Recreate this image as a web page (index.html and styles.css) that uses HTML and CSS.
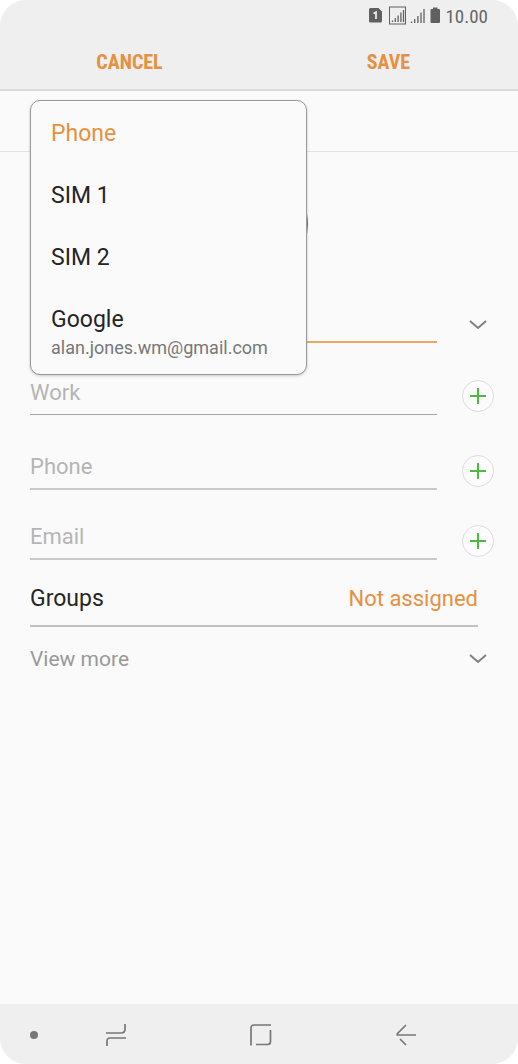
FILE: index.html
```html
<!DOCTYPE html>
<html lang="en">
<head>
<meta charset="utf-8">
<meta name="viewport" content="width=device-width, initial-scale=1">
<title>Create contact</title>
<link rel="stylesheet" href="styles.css">
</head>
<body>
<div class="screen">
  <header class="top">
    <div class="status">
      <svg class="status-icons" width="74" height="20" viewBox="0 0 74 20" aria-hidden="true">
        <path class="fill" d="M1.500 2H9.500L13 5.500V15Q13 16.500 11.500 16.500H1.500Q0 16.500 0 15V3.500Q0 2 1.500 2Z"/>
        <path class="digit" d="M4.500 7.500L7 6.200V13"/>
        <rect class="frame" x="20.500" y="1" width="16" height="17"/>
        <path class="bars" d="M23.500 16V14.500M26.300 16V12M29.100 16V9.500M31.900 16V6.500M34.500 16V4"/>
        <path class="bars" d="M42.500 17V15.500M45.700 17V13M48.900 17V10M52 17V6.500M55 17V3"/>
        <path class="fill" d="M64 1.500H68.500V3H70Q71 3 71 4V16Q71 17 70 17H62.500Q61.500 17 61.500 16V4Q61.500 3 62.500 3H64Z"/>
      </svg>
      <time>10.00</time>
    </div>
    <div class="actions">
      <button type="button">CANCEL</button>
      <button type="button">SAVE</button>
    </div>
  </header>

  <main class="form">
    <div class="account">
      <ul class="menu" aria-label="Save contact to">
        <li><button type="button" class="option selected">Phone</button></li>
        <li><button type="button" class="option">SIM 1</button></li>
        <li><button type="button" class="option">SIM 2</button></li>
        <li><button type="button" class="option">Google<small>alan.jones.wm@gmail.com</small></button></li>
      </ul>
    </div>
    <div class="portrait"><button type="button" class="photo" aria-label="Add photo"></button></div>
    <div class="row name">
      <input class="field active" type="text" aria-label="Name">
      <button type="button" class="expand" aria-label="Expand name">
        <svg width="18" height="10" viewBox="0 0 18 10"><path d="M1 1L9 8L17 1"/></svg>
      </button>
    </div>
    <div class="row work">
      <input class="field" type="text" placeholder="Work" aria-label="Work">
      <button type="button" class="add" aria-label="Add work"><svg width="16" height="16" viewBox="0 0 16 16"><path d="M8 0V16M0 8H16"/></svg></button>
    </div>
    <div class="row phone">
      <input class="field soft" type="tel" placeholder="Phone" aria-label="Phone">
      <button type="button" class="add" aria-label="Add phone"><svg width="16" height="16" viewBox="0 0 16 16"><path d="M8 0V16M0 8H16"/></svg></button>
    </div>
    <div class="row email">
      <input class="field soft" type="email" placeholder="Email" aria-label="Email">
      <button type="button" class="add" aria-label="Add email"><svg width="16" height="16" viewBox="0 0 16 16"><path d="M8 0V16M0 8H16"/></svg></button>
    </div>
    <button type="button" class="groups"><span>Groups</span><span class="value">Not assigned</span></button>
    <button type="button" class="more"><span>View more</span>
      <svg width="18" height="10" viewBox="0 0 18 10" aria-hidden="true"><path d="M1 1L9 8L17 1"/></svg>
    </button>
  </main>

  <nav class="navbar" aria-label="System">
    <button type="button" class="pin" aria-label="Pin bar"><svg width="8" height="8" viewBox="0 0 8 8"><circle cx="4" cy="4" r="4"/></svg></button>
    <button type="button" aria-label="Recent apps"><svg width="20" height="24" viewBox="0 0 20 24"><path d="M0 10H15Q19 10 19 6V1M20 15H4Q1 15 1 18V23"/></svg></button>
    <button type="button" aria-label="Home"><svg width="22" height="22" viewBox="0 0 22 22"><path d="M1 21.500V4Q1 1 4 1H21M20.500 6V17.500Q20.500 20.500 17.500 20.500H6"/></svg></button>
    <button type="button" aria-label="Back"><svg width="20" height="22" viewBox="0 0 20 22"><path d="M10 1L1.500 9.500Q.5 11 2 11H20M4 15L10 21"/></svg></button>
  </nav>
</div>
</body>
</html>
```
FILE: styles.css
```css
* { box-sizing: border-box; }

body {
  margin: 0;
  background: #fff;
  font-family: Roboto, "Liberation Sans", sans-serif;
  color: #252525;
}

button {
  margin: 0;
  padding: 0;
  border: 0;
  background: none;
  font: inherit;
  color: inherit;
  cursor: pointer;
}

svg { display: block; fill: none; }

.screen {
  display: flex;
  flex-direction: column;
  min-height: 100vh;
  border-radius: 26px;
  overflow: hidden;
  background: #fafafa;
}

.top {
  background: #efefef;
  border-bottom: 2px solid #dadada;
}

.status {
  display: flex;
  justify-content: flex-end;
  align-items: center;
  gap: 2px;
  height: 32px;
  padding-right: 30px;
  font-family: "Roboto Condensed", Roboto, sans-serif;
  font-size: 19px;
  color: #666;
}

.status-icons .fill { fill: #606060; }
.status-icons .digit { stroke: #efefef; stroke-width: 1.7; }
.status-icons .frame { stroke: #606060; stroke-width: 1; }
.status-icons .bars { stroke: #606060; stroke-width: 1.3; }

.actions {
  display: grid;
  grid-template-columns: 1fr 1fr;
  height: 57px;
  padding-top: 2px;
  font-family: "Roboto Condensed", Roboto, sans-serif;
  font-size: 20px;
  font-weight: 700;
  color: #e69040;
}

.form { flex: 1; }

.account {
  position: relative;
  height: 61px;
  border-bottom: 1px solid #e2e2e2;
}

.menu {
  position: absolute;
  z-index: 1;
  top: 9px;
  left: 30px;
  width: 277px;
  margin: 0;
  padding: 2px 0 12px;
  list-style: none;
  background: #fafafa;
  border: 1px solid #999;
  border-radius: 10px;
  box-shadow: 0 1px 3px rgba(0, 0, 0, 0.2);
}

.option {
  display: block;
  width: 100%;
  padding: 17px 20px;
  font-size: 23px;
  line-height: 28px;
  text-align: left;
}

.option.selected { color: #e69040; }

.option small {
  display: block;
  font-size: 18px;
  color: #777;
}

.menu li:last-child .option { padding-bottom: 0; }

.portrait {
  display: flex;
  justify-content: center;
  padding: 23px 0 25px;
}

.photo {
  width: 98px;
  height: 98px;
  border: 2px solid #777;
  border-radius: 50%;
}

.row {
  display: grid;
  grid-template-columns: 1fr 32px;
  column-gap: 25px;
  align-items: end;
  padding: 0 24px 0 30px;
}

.work { margin-top: 27px; }
.phone { margin-top: 30px; }
.email { margin-top: 25px; }

.field {
  width: 100%;
  height: 45px;
  padding: 0;
  border: 0;
  border-bottom: 1px solid #a5a5a5;
  border-radius: 0;
  outline: 0;
  background: none;
  font: inherit;
  font-size: 22px;
  color: inherit;
}

.field::placeholder { color: #b5b5b5; opacity: 1; }
.field.soft { border-bottom: 2px solid #c8c8c8; }
.field.active { border-bottom: 2px solid #e9a765; }

.expand {
  display: flex;
  justify-content: center;
  align-items: center;
  height: 32px;
  margin-bottom: 2px;
}

.expand path, .more path { stroke: #808080; stroke-width: 2; }

.add {
  display: flex;
  justify-content: center;
  align-items: center;
  width: 32px;
  height: 32px;
  margin-bottom: 3px;
  border: 1px solid #ddd;
  border-radius: 50%;
  background: #fcfcfc;
}

.add path { stroke: #4cba3c; stroke-width: 2; }

.groups, .more {
  display: flex;
  justify-content: space-between;
  align-items: center;
}

.groups {
  width: calc(100% - 70px);
  height: 67px;
  margin: 0 40px 0 30px;
  padding-top: 12px;
  border-bottom: 2px solid #c0c0c0;
  font-size: 23px;
}

.groups .value { font-size: 22px; color: #e69040; }

.more {
  width: 100%;
  height: 64px;
  padding: 0 31px 0 30px;
  font-size: 21px;
  color: #999;
}

.navbar {
  display: grid;
  grid-template-columns: 43fr 145fr 145fr 145fr 40fr;
  height: 60px;
  padding-top: 2px;
  background: #efefef;
}

.navbar button {
  display: flex;
  justify-content: center;
  align-items: center;
}

.navbar .pin { justify-content: flex-end; padding-right: 5px; }
.navbar path { stroke: #777; stroke-width: 1.7; }
.navbar circle { fill: #777; }
```
